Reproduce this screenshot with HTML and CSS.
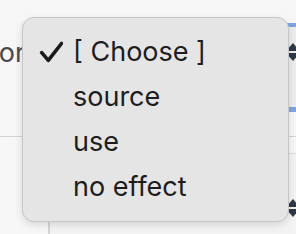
FILE: index.html
```html
<!DOCTYPE html>
<html lang="en">
<head>
    <meta charset="UTF-8">
    <title>Effect select</title>
    <link rel="stylesheet" href="styles.css">
</head>
<body>
<div class="page">
    <div class="field field-top">
        <span class="label">Category</span>
        <div class="select">
            <span class="stepper"></span>
        </div>
    </div>
    <div class="divider"></div>
    <div class="field field-bottom">
        <div class="box">
            <span class="stepper"></span>
        </div>
    </div>
</div>

<ul class="menu">
    <li class="item checked">
        <svg class="check" width="24" height="22" viewBox="0 0 24 22">
            <path d="M2.7 11.7 L9.3 19.4 L22.5 2.5" fill="none" stroke="#1a1a1a" stroke-width="3.6" stroke-linecap="round" stroke-linejoin="round"/>
        </svg>
        [ Choose ]
    </li>
    <li class="item">source</li>
    <li class="item">use</li>
    <li class="item">no effect</li>
</ul>
</body>
</html>
```

FILE: styles.css
```css
body {
    margin: 0;
    width: 296px;
    height: 234px;
    overflow: hidden;
    font-family: 'Inter', 'Liberation Sans', sans-serif;
    background-color: #f7f7f7;
    color: #222;
}

.page {
    display: flex;
    flex-direction: column;
    height: 234px;
}

.field {
    display: flex;
}

.field-top {
    height: 112px;
    padding-top: 23px;
    box-sizing: border-box;
}

.label {
    flex: 0 0 auto;
    margin-left: -77px;
    margin-top: 13px;
    font-size: 27px;
    line-height: 33px;
    color: #4a4a4a;
    white-space: nowrap;
}

.select {
    flex: 1;
    margin-left: 8px;
    border-top: 4px solid #7fa3e6;
    border-bottom: 5px solid #7fa3e6;
    background-color: #ededed;
    position: relative;
}

.stepper {
    position: absolute;
    right: -4px;
    top: 16px;
    width: 0;
    height: 0;
    border-left: 7px solid transparent;
    border-right: 7px solid transparent;
    border-bottom: 8px solid #2d3a47;
}

.stepper::after {
    content: '';
    position: absolute;
    left: -7px;
    top: 10px;
    border-left: 7px solid transparent;
    border-right: 7px solid transparent;
    border-top: 8px solid #2d3a47;
}

.divider {
    height: 1px;
    margin-top: 24px;
    background-color: #d2d2d2;
}

.field-bottom {
    flex: 1;
    padding-top: 16px;
}

.box {
    flex: 1;
    margin-left: 48px;
    border-left: 2px solid #d4d4d4;
    border-top: 1px solid #dadada;
    background-color: #f3f3f3;
    position: relative;
}

.box .stepper {
    top: 45px;
}

.menu {
    position: absolute;
    left: 22px;
    top: 17px;
    width: 267px;
    height: 205px;
    box-sizing: border-box;
    margin: 0;
    padding: 11px 0 12px 0;
    list-style: none;
    background-color: #e5e5e5;
    border: 1px solid #c6c6c6;
    border-radius: 12px;
    box-shadow: 0 3px 8px rgba(0, 0, 0, 0.12);
}

.item {
    height: 45px;
    line-height: 45px;
    font-size: 27px;
    padding-left: 50px;
    position: relative;
    color: #1d1d1d;
    white-space: nowrap;
}

.check {
    position: absolute;
    left: 16px;
    top: 12px;
}
```
